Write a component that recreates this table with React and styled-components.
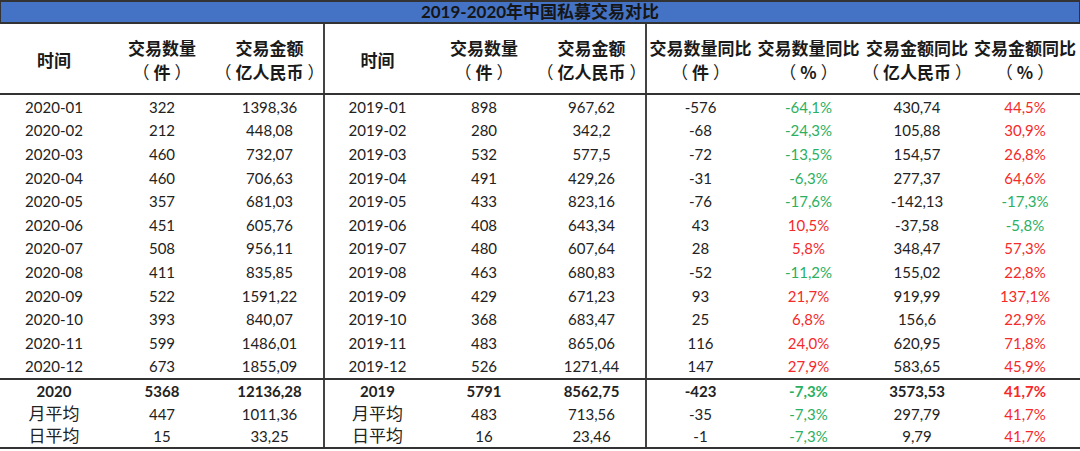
import React from "react";
import styled, { createGlobalStyle } from "styled-components";

const GlobalStyle = createGlobalStyle`
  html, body { margin: 0; padding: 0; background: #ffffff; overflow: hidden; }
  body { font-family: "Lato", "Noto Sans CJK SC", sans-serif; }
`;

const COLS = "108px 108px 107px 107px 108px 107px 109px 109px 108px 108px";
const DIVIDERS = [3, 6];

const Sheet = styled.div`
  width: 1080px;
  height: 449px;
  box-sizing: border-box;
  border-top: 2px solid #333;
  border-bottom: 2px solid #333;
  display: flex;
  flex-direction: column;
  overflow: hidden;
  color: #222;
`;

const TitleBar = styled.div`
  height: 20px;
  flex: none;
  background: #4472c4;
  border-left: 1px solid #333;
  border-right: 1px solid #333;
  border-bottom: 2px solid #333;
  display: flex;
  align-items: center;
  justify-content: center;
  font-family: "Lato", "Noto Sans CJK SC", sans-serif;
  font-weight: 700;
  font-size: 17px;
  line-height: 20px;
  color: #161616;
`;

const Row = styled.div`
  display: grid;
  grid-template-columns: ${COLS};
  grid-template-rows: 100%;
  height: ${(p) => p.$h}px;
  flex: none;
  box-sizing: border-box;
  border-bottom: ${(p) => (p.$line ? "2px solid #333" : "none")};
`;

const Cell = styled.div`
  box-sizing: border-box;
  border-left: ${(p) => (p.$divider ? "2px solid #444" : "none")};
  display: flex;
  flex-direction: column;
  align-items: center;
  justify-content: center;
  font-size: ${(p) => (p.$cjk ? 17 : 15)}px;
  line-height: 20px;
  font-weight: ${(p) => (p.$bold ? 700 : 400)};
  color: ${(p) => (p.$tone === "green" ? "#2bb061" : p.$tone === "red" ? "#f52a2a" : "#222")};
  white-space: nowrap;
`;

const HeadCell = styled(Cell)`
  font-family: "Noto Sans CJK SC", sans-serif;
  font-size: 17px;
  font-weight: 700;
  line-height: 24px;
  color: #1a1a1a;
  padding-top: 2px;
`;

const HeadLine = styled.span`
  display: flex;
  align-items: center;
  justify-content: center;
`;

const Paren = styled.span`
  font-weight: 400;
  margin: ${(p) => (p.$open ? "0 4px 0 0" : "0 0 0 4px")};
`;

const BodyBlock = styled.div`
  display: flex;
  flex-direction: column;
  flex: none;
  border-bottom: ${(p) => (p.$last ? "none" : "2px solid #333")};
`;

const headers = [
  ["时间"],
  ["交易数量", "件"],
  ["交易金额", "亿人民币"],
  ["时间"],
  ["交易数量", "件"],
  ["交易金额", "亿人民币"],
  ["交易数量同比", "件"],
  ["交易数量同比", "%"],
  ["交易金额同比", "亿人民币"],
  ["交易金额同比", "%"],
];

const rows = [
  ["2020-01", "322", "1398,36", "2019-01", "898", "967,62", "-576", "-64,1%", "430,74", "44,5%"],
  ["2020-02", "212", "448,08", "2019-02", "280", "342,2", "-68", "-24,3%", "105,88", "30,9%"],
  ["2020-03", "460", "732,07", "2019-03", "532", "577,5", "-72", "-13,5%", "154,57", "26,8%"],
  ["2020-04", "460", "706,63", "2019-04", "491", "429,26", "-31", "-6,3%", "277,37", "64,6%"],
  ["2020-05", "357", "681,03", "2019-05", "433", "823,16", "-76", "-17,6%", "-142,13", "-17,3%"],
  ["2020-06", "451", "605,76", "2019-06", "408", "643,34", "43", "10,5%", "-37,58", "-5,8%"],
  ["2020-07", "508", "956,11", "2019-07", "480", "607,64", "28", "5,8%", "348,47", "57,3%"],
  ["2020-08", "411", "835,85", "2019-08", "463", "680,83", "-52", "-11,2%", "155,02", "22,8%"],
  ["2020-09", "522", "1591,22", "2019-09", "429", "671,23", "93", "21,7%", "919,99", "137,1%"],
  ["2020-10", "393", "840,07", "2019-10", "368", "683,47", "25", "6,8%", "156,6", "22,9%"],
  ["2020-11", "599", "1486,01", "2019-11", "483", "865,06", "116", "24,0%", "620,95", "71,8%"],
  ["2020-12", "673", "1855,09", "2019-12", "526", "1271,44", "147", "27,9%", "583,65", "45,9%"],
];

const summary = [
  { bold: true, cells: ["2020", "5368", "12136,28", "2019", "5791", "8562,75", "-423", "-7,3%", "3573,53", "41,7%"] },
  { bold: false, cells: ["月平均", "447", "1011,36", "月平均", "483", "713,56", "-35", "-7,3%", "297,79", "41,7%"] },
  { bold: false, cells: ["日平均", "15", "33,25", "日平均", "16", "23,46", "-1", "-7,3%", "9,79", "41,7%"] },
];

const toneOf = (i, v) => {
  if (i === 7 || i === 9) return v.startsWith("-") ? "green" : "red";
  return undefined;
};

const isCjk = (v) => /[\u4e00-\u9fff]/.test(v);

function DataRow({ cells, bold, h }) {
  return (
    <Row $h={h}>
      {cells.map((v, i) => (
        <Cell
          key={i}
          $divider={DIVIDERS.includes(i)}
          $bold={bold}
          $cjk={isCjk(v)}
          $tone={toneOf(i, v)}
        >
          {v}
        </Cell>
      ))}
    </Row>
  );
}

export default function App() {
  return (
    <>
      <GlobalStyle />
      <Sheet>
        <TitleBar>2019-2020年中国私募交易对比</TitleBar>
        <Row $h={71} $line>
          {headers.map(([title, unit], i) => (
            <HeadCell key={i} $divider={DIVIDERS.includes(i)}>
              <HeadLine>{title}</HeadLine>
              {unit && (
                <HeadLine>
                  <Paren $open>（</Paren>
                  <span>{unit}</span>
                  <Paren>）</Paren>
                </HeadLine>
              )}
            </HeadCell>
          ))}
        </Row>
        <BodyBlock>
          {rows.map((r, i) => (
            <DataRow key={i} cells={r} h={23.6} />
          ))}
        </BodyBlock>
        <BodyBlock $last>
          {summary.map((r, i) => (
            <DataRow key={i} cells={r.cells} bold={r.bold} h={22.25} />
          ))}
        </BodyBlock>
      </Sheet>
    </>
  );
}
